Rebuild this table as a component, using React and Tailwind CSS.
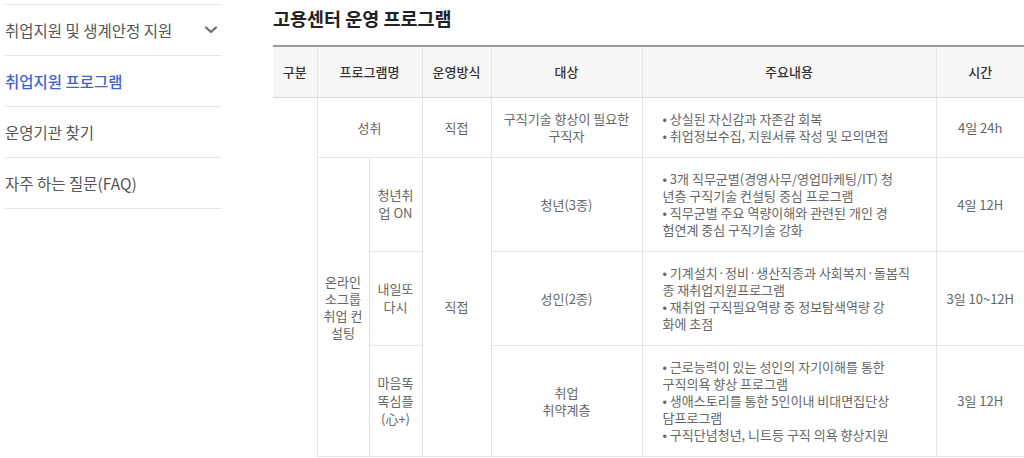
import React from "react";

const font = { fontFamily: '"Noto Sans CJK KR", "Noto Sans", sans-serif' };

function Chevron() {
  return (
    <svg width="14" height="10" viewBox="0 0 14 10" className="mr-[3px]">
      <path d="M2 2.5 L7 7 L12 2.5" fill="none" stroke="#6b6b6b" strokeWidth="2.2" strokeLinecap="round" strokeLinejoin="round" />
    </svg>
  );
}

function SideItem({ children, active, chevron }) {
  return (
    <div className="h-[51px] flex items-center justify-between border-b border-[#e3e3e3]">
      <span className={"text-[15.5px] leading-[20px] " + (active ? "text-[#3f63d2] font-medium" : "text-[#555]")}>{children}</span>
      {chevron && <Chevron />}
    </div>
  );
}

const th = "border border-[#e4e4e4] border-b-[#dcdcdc] bg-[#f7f7f7] text-[#333] font-medium text-[13px] text-center align-middle border-t-0";
const td = "border border-[#e4e4e4] text-[#666] text-[13px] leading-[17px] text-center align-middle";
const tdList = "border border-[#e4e4e4] text-[#666] text-[13px] leading-[17px] text-left align-middle pl-[20px] pr-[10px] whitespace-nowrap";

export default function App() {
  return (
    <div className="w-[1024px] h-[458px] overflow-hidden bg-white flex" style={font}>
      <div className="w-[216px] ml-[5px] mt-[4px] shrink-0">
        <div className="border-t border-[#e3e3e3]">
          <SideItem chevron>취업지원 및 생계안정 지원</SideItem>
          <SideItem active>취업지원 프로그램</SideItem>
          <SideItem>운영기관 찾기</SideItem>
          <SideItem>자주 하는 질문(FAQ)</SideItem>
        </div>
      </div>
      <div className="ml-[52px] w-[751px] shrink-0">
        <h2 className="mt-[6px] text-[18.5px] leading-[24px] font-bold text-[#222]">고용센터 운영 프로그램</h2>
        <table className="mt-[15px] w-[751px] table-fixed border-collapse border-t-2 border-t-[#9a9a9a]">
          <colgroup>
            <col className="w-[44px]" />
            <col className="w-[52px]" />
            <col className="w-[53px]" />
            <col className="w-[69px]" />
            <col className="w-[151px]" />
            <col className="w-[294px]" />
            <col className="w-[88px]" />
          </colgroup>
          <thead>
            <tr className="h-[51px]">
              <th className={th + " border-l-0"}>구분</th>
              <th className={th} colSpan={2}>프로그램명</th>
              <th className={th}>운영방식</th>
              <th className={th}>대상</th>
              <th className={th}>주요내용</th>
              <th className={th + " border-r-0"}>시간</th>
            </tr>
          </thead>
          <tbody>
            <tr className="h-[60px]">
              <td rowSpan={4} className="border-0"></td>
              <td className={td} colSpan={2}>성취</td>
              <td className={td}>직접</td>
              <td className={td + " px-[4px]"}>구직기술 향상이 필요한<br />구직자</td>
              <td className={tdList}>
                • 상실된 자신감과 자존감 회복<br />• 취업정보수집, 지원서류 작성 및 모의면접
              </td>
              <td className={td + " border-r-0"}>4일 24h</td>
            </tr>
            <tr className="h-[94px]">
              <td className={td + " px-[4px]"} rowSpan={3}>온라인<br />소그룹<br />취업 컨<br />설팅</td>
              <td className={td + " px-[6px] leading-[18px]"}>청년취<br />업 ON</td>
              <td className={td} rowSpan={3}>직접</td>
              <td className={td}>청년(3종)</td>
              <td className={tdList}>
                • 3개 직무군별(경영사무/영업마케팅/IT) 청<br />
                년층 구직기술 컨설팅 중심 프로그램<br />
                • 직무군별 주요 역량이해와 관련된 개인 경<br />
                험연계 중심 구직기술 강화
              </td>
              <td className={td + " border-r-0"}>4일 12H</td>
            </tr>
            <tr className="h-[94px]">
              <td className={td + " px-[6px] leading-[18px]"}>내일또<br />다시</td>
              <td className={td}>성인(2종)</td>
              <td className={tdList}>
                • 기계설치·정비·생산직종과 사회복지·돌봄직<br />
                종 재취업지원프로그램<br />
                • 재취업 구직필요역량 중 정보탐색역량 강<br />
                화에 초점
              </td>
              <td className={td + " border-r-0"}>3일 10~12H</td>
            </tr>
            <tr className="h-[111px]">
              <td className={td + " px-[6px] leading-[18px]"}>마음똑<br />똑심플<br />(心+)</td>
              <td className={td}>취업<br />취약계층</td>
              <td className={tdList}>
                • 근로능력이 있는 성인의 자기이해를 통한<br />
                구직의욕 향상 프로그램<br />
                • 생애스토리를 통한 5인이내 비대면집단상<br />
                담프로그램<br />
                • 구직단념청년, 니트등 구직 의욕 향상지원
              </td>
              <td className={td + " border-r-0"}>3일 12H</td>
            </tr>
          </tbody>
        </table>
      </div>
    </div>
  );
}
